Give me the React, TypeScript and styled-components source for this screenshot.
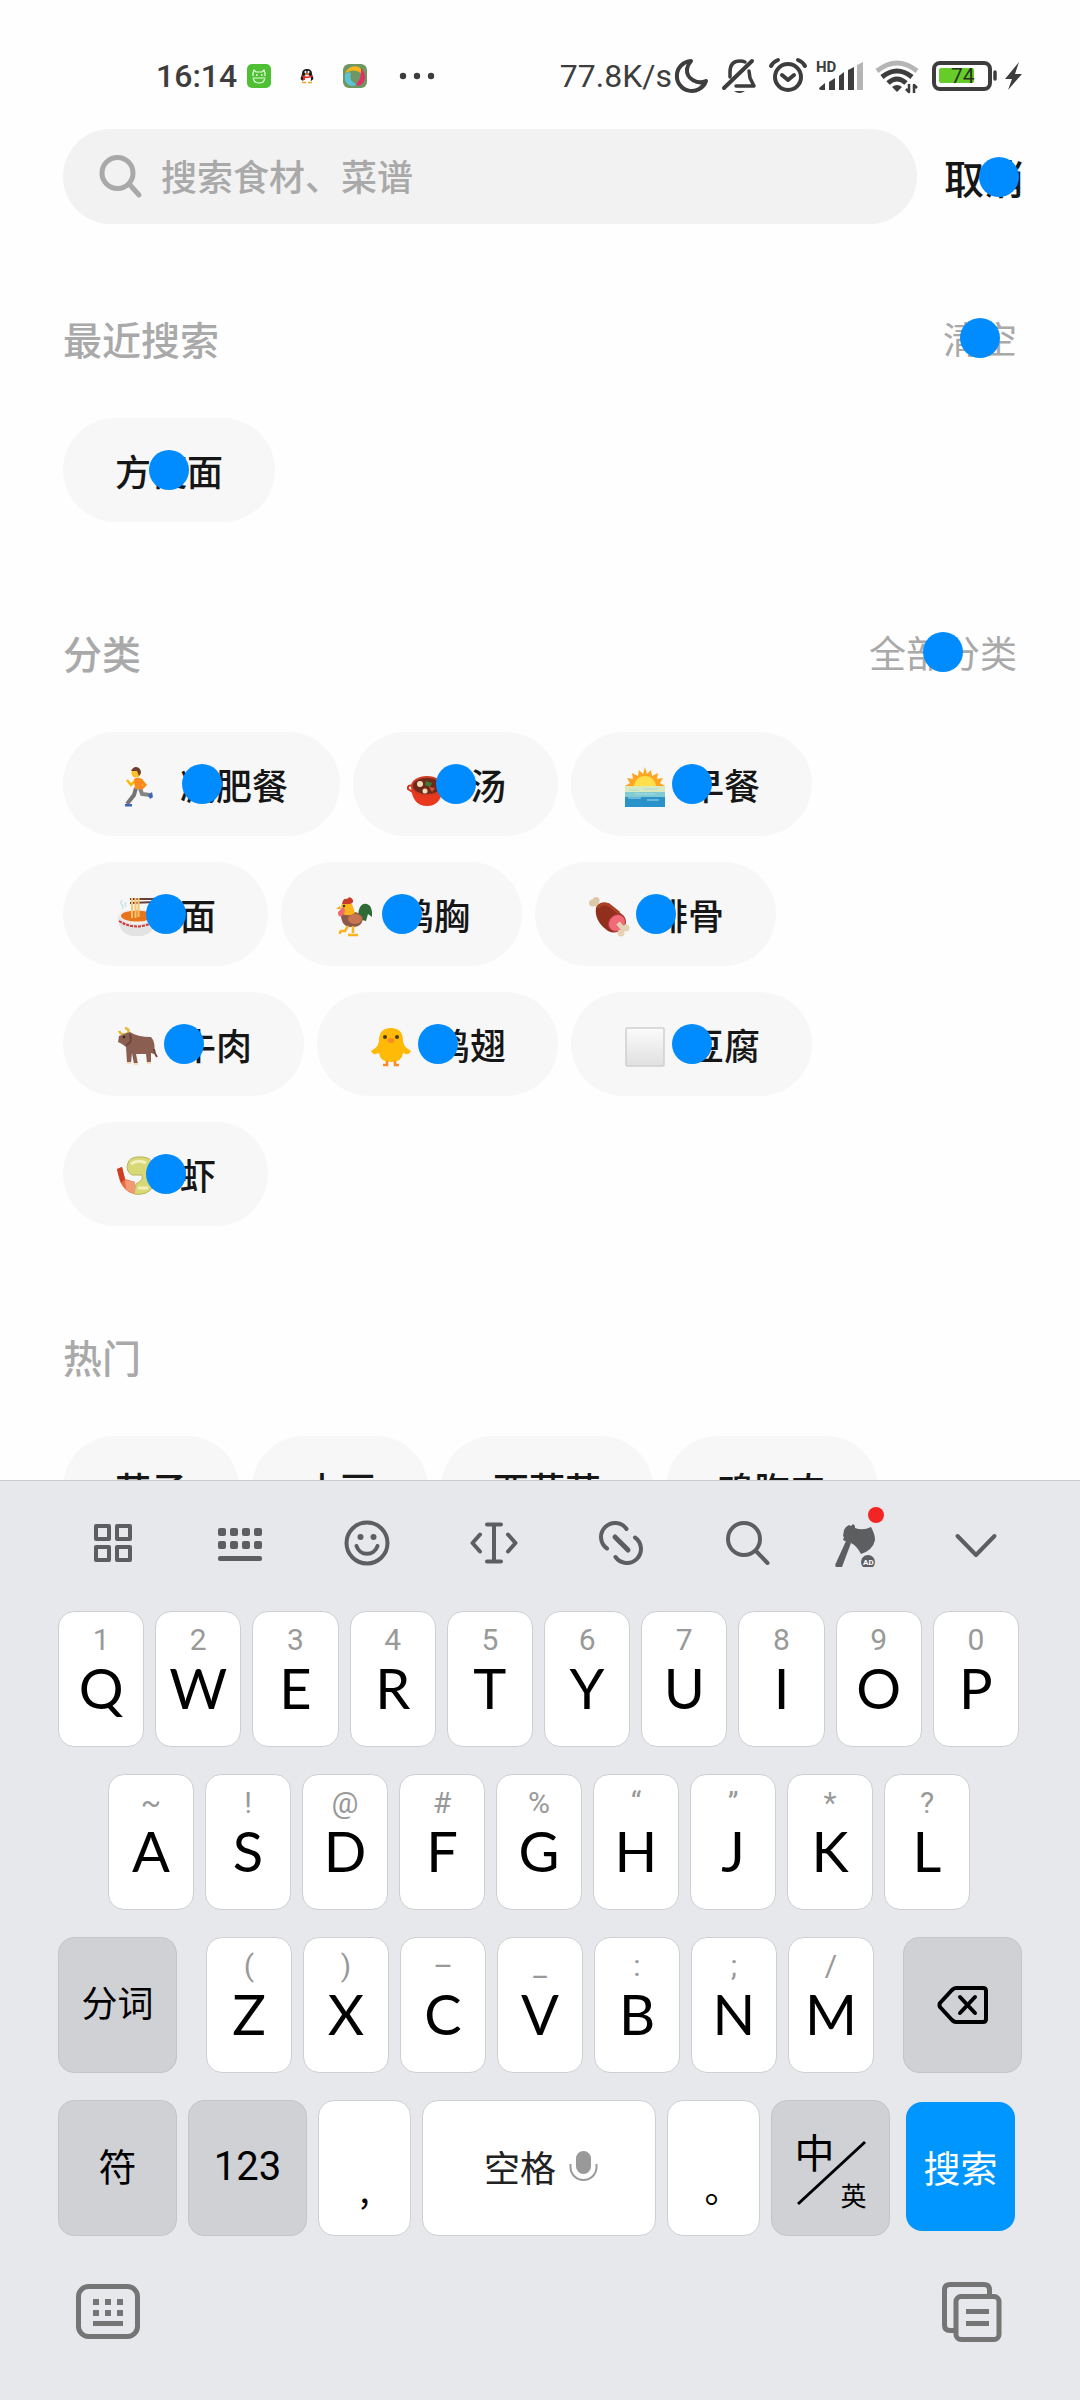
import React from "react";
import styled, { createGlobalStyle } from "styled-components";

const cjk = '"Noto Sans CJK SC", "Noto Sans", sans-serif';
const latin = 'Roboto, "Noto Sans CJK SC", sans-serif';

const GlobalStyle = createGlobalStyle`
  *, *::before, *::after { box-sizing: border-box; }
  body { margin: 0; background: #fefefe; font-family: ${cjk}; }
  button, input { font: inherit; color: inherit; border: 0; padding: 0; margin: 0; background: none; }
  button { cursor: pointer; }
  svg { display: block; flex: none; }
`;

const Screen = styled.div`
  display: flex;
  flex-direction: column;
  height: 100vh;
  background: #fefefe;
`;

/* ---------- status bar ---------- */

const StatusBar = styled.header`
  flex: none;
  display: flex;
  align-items: center;
  justify-content: space-between;
  height: 129px;
  padding: 22px 57px 0 156px;
  color: #3d3d3d;
  font: 500 32px/40px ${latin};
`;

const StatusGroup = styled.div`
  display: flex;
  align-items: center;
`;

const Notices = styled.div`
  display: flex;
  align-items: center;
  gap: 24px;
  margin-left: 10px;
`;

const Speed = styled.span`
  font-weight: 400;
`;

/* ---------- search page ---------- */

const SearchRow = styled.form`
  flex: none;
  display: flex;
  align-items: stretch;
  height: 95px;
  padding-left: 63px;
`;

const SearchField = styled.label`
  flex: 1;
  display: flex;
  align-items: center;
  gap: 17px;
  min-width: 0;
  padding-left: 36px;
  border-radius: 48px;
  background: #f2f2f2;
`;

const SearchInput = styled.input`
  flex: 1;
  min-width: 0;
  padding-bottom: 4px;
  outline: 0;
  color: #161616;
  font-size: 36px;
  line-height: 52px;
  font-weight: 500;
  &::placeholder { color: #a9a9a9; opacity: 1; }
`;

const CancelButton = styled.button`
  position: relative;
  padding: 0 56px 0 27px;
  color: #161616;
  font-size: 40px;
  line-height: 52px;
  font-weight: 500;
`;

const Dot = styled.span`
  position: absolute;
  top: 50%;
  left: 50%;
  width: 40px;
  height: 40px;
  margin: -20px 0 0 -20px;
  border-radius: 50%;
  background: #008cff;
`;

const Content = styled.main`
  flex: 1;
  min-height: 0;
  overflow: hidden;
  display: flex;
  flex-direction: column;
  gap: 104px;
  padding: 88px 63px 0;
`;

const Section = styled.section`
  flex: none;
`;

const SectionHead = styled.div`
  display: flex;
  align-items: center;
  justify-content: space-between;
  height: 52px;
  margin-bottom: 54px;
  color: #a9a9a9;
`;

const SectionTitle = styled.h2`
  margin: 0;
  font-size: 39px;
  line-height: 52px;
  font-weight: 500;
`;

const SectionAction = styled.button`
  position: relative;
  font-size: 37px;
  line-height: 52px;
`;

const Chips = styled.div`
  display: flex;
  flex-wrap: wrap;
  gap: 26px 13px;
  max-width: 860px;
`;

const Chip = styled.button`
  position: relative;
  display: flex;
  align-items: center;
  height: 104px;
  padding: 0 52px;
  border-radius: 52px;
  background: #f7f7f7;
  color: #161616;
  font-size: 36px;
  line-height: 52px;
  font-weight: 500;
`;

const EmojiBox = styled.span`
  width: 65px;
  padding: 5px 0 0 2px;
`;

/* ---------- keyboard ---------- */

const Keyboard = styled.section`
  flex: none;
  border-top: 1px solid #c9cacd;
  background: #e6e8ec;
`;

const Toolbar = styled.div`
  display: grid;
  grid-template-columns: repeat(6, 127fr) 88fr 154fr;
  height: 130px;
  padding: 0 27px 6px 50px;
`;

const ToolButton = styled.button`
  display: flex;
  align-items: center;
  justify-content: center;
  color: #5d5e60;
`;

const Badged = styled.span`
  position: relative;
`;

const RedBadge = styled.span`
  position: absolute;
  top: -12px;
  right: -5px;
  width: 16px;
  height: 16px;
  border-radius: 50%;
  background: #f22424;
`;

const KeyRows = styled.div`
  display: flex;
  flex-direction: column;
  gap: 27px;
`;

const LetterRow = styled.div<{ $left?: number; $right?: number }>`
  display: grid;
  grid-auto-flow: column;
  grid-auto-columns: minmax(0, 1fr);
  gap: 11px;
  padding-left: ${(p) => p.$left ?? 0}px;
  padding-right: ${(p) => p.$right ?? 0}px;
`;

const ShiftRow = styled.div`
  display: grid;
  grid-template-columns: 119fr 668fr 119fr;
  gap: 29px;
  padding: 0 58px;
`;

const SpaceRow = styled.div`
  display: grid;
  grid-template-columns: 119fr 119fr 93fr 234fr 93fr 119fr 121fr;
  gap: 11px;
  padding: 0 58px;
`;

const Key = styled.button<{ $grey?: boolean }>`
  display: flex;
  align-items: center;
  justify-content: center;
  min-width: 0;
  height: 136px;
  border: 1px solid ${(p) => (p.$grey ? "#c4c5c8" : "#cfcfd2")};
  border-radius: 16px;
  background: ${(p) => (p.$grey ? "#d0d1d5" : "#ffffff")};
  color: #000;
  font-size: 36px;
  line-height: 52px;
`;

const LetterKey = styled(Key)`
  flex-direction: column;
  justify-content: flex-start;
  padding-top: 12px;
`;

const Hint = styled.span`
  color: #999;
  font: 400 30px/32px ${latin};
`;

const Letter = styled.span`
  font: 400 56px/64px Lato, sans-serif;
`;

const SplitKey = styled(Key)`
  padding-bottom: 8px;
`;

const SymbolKey = styled(Key)`
  padding-bottom: 6px;
  font-size: 38px;
`;

const NumberKey = styled(Key)`
  padding-bottom: 2px;
  font: 400 40px/52px ${latin};
`;

const PunctKey = styled(Key)`
  align-items: flex-end;
  padding-bottom: 22px;
  font-feature-settings: "halt";
`;

const SpaceKey = styled(Key)`
  gap: 13px;
  padding: 0 0 4px 4px;
  color: #222;
`;

const GoKey = styled(Key)`
  height: 129px;
  margin: 2px 7px 5px 5px;
  border: 0;
  background: #0096ff;
  color: #fff;
  font-size: 37px;
`;

const LangLabel = styled.span`
  position: relative;
  display: flex;
  flex-direction: column;
  width: 72px;
  padding-top: 9px;
`;

const LangMain = styled.span`
  align-self: flex-start;
  font-size: 40px;
  line-height: 44px;
`;

const LangAlt = styled.span`
  align-self: flex-end;
  font-size: 26px;
  line-height: 43px;
`;

const Slash = styled.svg`
  position: absolute;
  left: 2px;
  top: 20px;
`;

const BottomBar = styled.div`
  display: flex;
  align-items: center;
  justify-content: space-between;
  height: 164px;
  padding: 0 78px 12px 76px;
  color: #757575;
`;

/* ---------- drawings ---------- */

const emojis: Record<string, React.ReactNode> = {
  run: (
    <>
      <path d="M19 21 L17 28 L10 37" stroke="#757575" strokeWidth="4" fill="none" />
      <path d="M23 21 L25 27 L33 28" stroke="#858585" strokeWidth="4" fill="none" />
      <path d="M8 37 h7 v2.500 h-7z M31 28 l4-3 1 5-3 2z" fill="#3f65b5" />
      <path d="M18 14 L14 18 L10 13" stroke="#ffb800" strokeWidth="2.500" fill="none" />
      <path d="M17 12 Q22 9 26 13 L25 22 H18z" fill="#ff8a1c" />
      <path d="M24 13 L28 18 L24 22" stroke="#ff8a1c" strokeWidth="3" fill="none" />
      <circle cx="19" cy="6" r="4.500" fill="#ffc024" />
      <path d="M14 4 Q17-2 22 1 Q26 5 22 9 L20 4z" fill="#6d3f2c" />
    </>
  ),
  pot: (
    <>
      <path d="M6 19 Q0 17 1 22 L7 26 M34 19 Q40 17 39 22 L33 26" stroke="#d8321c" strokeWidth="2" fill="none" />
      <path d="M4 19 Q5 39 20 39 Q35 39 36 19z" fill="#e8391f" />
      <ellipse cx="20" cy="19" rx="16" ry="10" fill="#d23a22" />
      <ellipse cx="20" cy="19" rx="14" ry="8" fill="#6d2a1c" />
      <circle cx="13" cy="17" r="3" fill="#f1dcb8" />
      <circle cx="18" cy="24" r="2.500" fill="#f1dcb8" />
      <path d="M19 14l6 2-2 4-5-2z" fill="#3f7a35" />
      <path d="M22 20l6 1-3 4z" fill="#d9532a" />
    </>
  ),
  sunrise: (
    <>
      <path d="M0 19 L5 16 L2 11 L8 12 L7 6 L13 9 L14 3 L18 7 L20 0 L22 7 L26 3 L27 9 L33 6 L32 12 L38 11 L35 16 L40 19z" fill="#ffa51f" />
      <path d="M9 20 A11 11 0 0 1 31 20z" fill="#ffe04a" />
      <rect y="19" width="40" height="7" fill="#d8e9bd" />
      <rect y="25" width="40" height="6" fill="#83cbd3" />
      <rect y="30" width="40" height="10" fill="#2992cb" />
      <path d="M4 23h10M18 22h15M10 27h20M3 31h13M22 33h12" stroke="#aadbe0" />
    </>
  ),
  noodles: (
    <>
      <path d="M13 2 H39 M13 6 L39 5" stroke="#6b4038" strokeWidth="1.800" />
      <path d="M5 3 q-2 3 0 5 t0 4 M9 5 q-2 3 0 5" stroke="#c9e3ee" strokeWidth="1.500" fill="none" />
      <ellipse cx="20" cy="19" rx="19" ry="7" fill="#f0efee" />
      <ellipse cx="20" cy="19" rx="16" ry="5.500" fill="#e8741c" />
      <path d="M15 1v20M18.500 1v20M21.500 1v19" stroke="#f7c56d" strokeWidth="2" />
      <path d="M1 19 Q1 36 15 39 H25 Q39 36 39 19 Q30 27 20 27 Q8 27 1 19z" fill="#e3e3e4" />
      <path d="M2 24 Q20 35 38 24" stroke="#d23a35" strokeWidth="2" strokeDasharray="3 1" fill="none" />
    </>
  ),
  rooster: (
    <>
      <path d="M23 22 Q23 5 32 7 Q38 9 37 20 L33 17 L31 24z" fill="#2e6b35" />
      <path d="M6 14 Q5 29 15 30 Q28 31 28 20 Q23 15 19 15z" fill="#8d5a47" />
      <path d="M6 8 Q12 2 17 7 L20 16 Q15 20 7 17z" fill="#fbb41a" />
      <ellipse cx="20" cy="22" rx="7" ry="5" fill="#c67650" />
      <path d="M7 7 Q8 1 12 2 Q15-2 18 3 Q19 7 13 7z" fill="#c73b2b" />
      <path d="M8 10 Q12 13 8 18 Q3 22 3 15z" fill="#ef6b70" />
      <path d="M5 9 L1 12 L6 12z" fill="#f9a01f" />
      <circle cx="9" cy="9" r="1.200" fill="#402c28" />
      <path d="M13 29 L10 34 H5 M18 29 V36 M13 38 H23 M5 34v3" stroke="#f9b51d" strokeWidth="2.500" fill="none" />
    </>
  ),
  meat: (
    <>
      <circle cx="3.500" cy="6" r="3.500" fill="#ddc8a8" />
      <circle cx="7" cy="3.500" r="3.500" fill="#ddc8a8" />
      <path d="M6 6 L12 12" stroke="#ddc8a8" strokeWidth="4" />
      <path d="M7 11 Q10 4 19 6 L35 19 Q39 26 33 32 Q27 38 19 34 Q5 24 7 11z" fill="#8f2f1c" />
      <path d="M9 11 Q13 5 20 8 L30 16" stroke="#aa4028" strokeWidth="3" fill="none" />
      <ellipse cx="28" cy="26" rx="9" ry="8" transform="rotate(-45 28 26)" fill="#f06a78" stroke="#b93a3c" />
      <path d="M29 26 L35 33" stroke="#e4d2b4" strokeWidth="4.500" />
      <circle cx="37" cy="31" r="3.500" fill="#e4d2b4" />
      <circle cx="32" cy="36" r="3.500" fill="#e4d2b4" />
    </>
  ),
  ox: (
    <>
      <path d="M2 4 Q5 10 11 6 Q13 2 8 1" stroke="#e9b634" strokeWidth="2.500" fill="none" />
      <path d="M2 9 L13 5 Q20 10 34 10 Q39 15 37 27 L34 26 L34 36 H30 L29 27 H19 L21 37 H17 L15 26 L14 36 H10 L9 20 Q6 17 1 15z" fill="#8a5f52" />
      <path d="M13 7 Q16 16 9 18" stroke="#6a453c" strokeWidth="2" fill="none" />
      <circle cx="7" cy="10" r="1.200" fill="#2e1f1c" />
      <path d="M37 22 Q37 26 40 30" stroke="#6a453c" strokeWidth="2" fill="none" />
      <path d="M10 36h4M17 37h4M30 36h4" stroke="#f0ddb6" strokeWidth="2" />
    </>
  ),
  chick: (
    <>
      <path d="M8 12 Q9 1 20 1 Q31 1 32 12 Q31 19 40 24 Q38 29 32 26 Q31 35 20 35 Q9 35 8 26 Q2 29 0 24 Q9 19 8 12z" fill="#ffb907" />
      <circle cx="14" cy="10" r="2" fill="#4a3a22" />
      <circle cx="26" cy="10" r="2" fill="#4a3a22" />
      <ellipse cx="20" cy="13.500" rx="3.500" ry="2.500" fill="#fb8c25" />
      <path d="M16 34v4h-4M24 34v4h4" stroke="#fb8c25" strokeWidth="2.500" fill="none" />
    </>
  ),
  tofu: (
    <>
      <defs>
        <linearGradient id="tofu" x1="0" y1="0" x2="0" y2="1">
          <stop offset="0" stopColor="#fbfbfb" />
          <stop offset="1" stopColor="#e0e0e0" />
        </linearGradient>
      </defs>
      <rect x="1" y="1" width="38" height="38" rx="1" fill="url(#tofu)" stroke="#cfcfcf" strokeWidth="1.500" />
    </>
  ),
  shrimp: (
    <>
      <path d="M11 6 Q12 1 20 0 Q32-1 35 5 Q41 16 36 30 Q30 39 17 37 L19 27 Q27 23 25 18 L15 18 Q8 14 11 6z" fill="#d9d877" stroke="#b9b55c" />
      <path d="M14 7 Q21 2 29 6 M21 31 L31 31" stroke="#f2f1bd" strokeWidth="3" fill="none" />
      <path d="M0 12 L5 10 L8 22 L18 25 L17 37 Q3 34 0 12z" fill="#e8693f" />
      <path d="M8 23 L18 25 L17 37 L9 33z" fill="#f29a72" />
      <path d="M0 12 L5 10 L8 22 L4 26z" fill="#cc3d22" />
    </>
  ),
};

function Emoji({ name }: { name: string }) {
  return (
    <EmojiBox aria-hidden="true">
      <svg width="40" height="40" viewBox="0 0 40 40" overflow="visible">{emojis[name]}</svg>
    </EmojiBox>
  );
}

function NoticeIcons() {
  return (
    <Notices aria-hidden="true">
      <svg width="24" height="24" viewBox="0 0 24 24">
        <rect width="24" height="24" rx="5" fill="#4fc034" />
        <path d="M6 12 V9 L7 6 L9 8 H15 L17 6 L18 9 V12 M5.500 14 H18.500 M6.500 15 Q7 19 12 19 Q17 19 17.500 15" stroke="#e9ffe4" strokeWidth="1.200" fill="none" />
        <path d="M9 11h1.500M14 11h1.500" stroke="#fff" strokeWidth="1.500" />
      </svg>
      <svg width="24" height="24" viewBox="0 0 24 24">
        <path d="M7 10 Q7 5 12 5 Q17 5 17 10 L18.500 15 L16 17 H8 L5.500 15z" fill="#171717" />
        <ellipse cx="12" cy="15" rx="4" ry="4" fill="#fff" />
        <path d="M7 11 Q12 14 17 11 V13 Q12 15 7 13z M8 13h2v3h-2z" fill="#e3261e" />
        <ellipse cx="10.500" cy="8" rx="1" ry="1.300" fill="#fff" />
        <ellipse cx="13.500" cy="8" rx="1" ry="1.300" fill="#fff" />
        <path d="M10 10h4M7 18.500h4M13 18.500h4" stroke="#f4a21c" strokeWidth="1.500" />
      </svg>
      <svg width="24" height="24" viewBox="0 0 24 24">
        <rect width="24" height="24" rx="6" fill="#6f9763" />
        <path d="M2 9 Q7 0 16 3 Q19 5 18 9 Q11 4 2 9z" fill="#f7b51c" />
        <path d="M18 4 Q25 12 20 19 Q17 23 12 21 Q19 16 18 4z" fill="#e62e66" />
        <path d="M2 10 Q6 7 8 9 Q5 16 14 21 Q5 24 2 16z" fill="#5cc3d8" />
      </svg>
      <svg width="52" height="24" viewBox="-9 0 52 24" fill="currentColor">
        <circle cx="3" cy="12" r="3.200" />
        <circle cx="17" cy="12" r="3.200" />
        <circle cx="31" cy="12" r="3.200" />
      </svg>
    </Notices>
  );
}

function SystemIcons() {
  const line = { fill: "none", stroke: "currentColor", strokeWidth: 4, strokeLinecap: "round" as const, strokeLinejoin: "round" as const };
  return (
    <>
      <svg width="43" height="40" viewBox="672 55 43 40" {...line} aria-label="勿扰">
        <path d="M691 60 A15 15 0 1 0 706 80 C698 84 686 78 687 68 Q688 63 691 60z" />
      </svg>
      <svg width="48" height="40" viewBox="715 55 48 40" {...line} aria-label="静音">
        <path d="M724 87 L752 60" />
        <path d="M730 76 V71 Q730 60 740 60 Q743 60 745 61 M749 70 L750 77 L754 85 H736" strokeWidth="3.500" />
        <path d="M734 90 h11 q-5.500 4 -11 0z" fill="currentColor" stroke="none" />
      </svg>
      <svg width="49" height="40" viewBox="763 55 49 40" {...line} aria-label="闹钟">
        <circle cx="788" cy="76" r="13" />
        <path d="M782 74 L788 79 L794 74" />
        <path d="M771 65 Q773 61 778 59 M798 59 Q803 61 805 65" />
      </svg>
      <svg width="58" height="40" viewBox="812 55 58 40" fill="currentColor" aria-label="信号">
        <text x="816" y="71" fontSize="15" fontWeight="700" fontFamily="Roboto, sans-serif">HD</text>
        <path d="M819 87 L825 82 V89 H821 Q819 89 819 87z M829 81 L835 77 V89 H829z M839 75 L844 71 V89 H839z M848 69 L854 66 V89 H848z" />
        <path d="M857 64 L863 61 V89 H857z" fill="#b5b5b5" />
      </svg>
      <svg width="55" height="40" viewBox="870 55 55 40" {...line} strokeWidth={5} strokeLinecap="butt" aria-label="无线网络">
        <path d="M877 70 Q897 54 917 70" stroke="#b5b5b5" />
        <path d="M882 76 Q897 64 912 76" />
        <path d="M888 82 Q897 74 906 82" />
        <path d="M892 86 Q897 82 902 86 L897 91z" fill="currentColor" stroke="none" />
        <path d="M909 83 V91 L906 88 M914 92 V84 L917 87" strokeWidth="2.500" />
      </svg>
      <svg width="76" height="40" viewBox="925 55 76 40" {...line} aria-label="电量">
        <rect x="934" y="62" width="56" height="26" rx="6" />
        <path d="M995 71 V78" strokeWidth="3.500" />
        <rect x="939" y="67" width="35" height="15" rx="2" fill="#66cc28" stroke="none" />
        <text x="951" y="82" fontSize="21" fontWeight="400" fontFamily="Roboto, sans-serif" fill="#26331f" stroke="none">74</text>
      </svg>
      <svg width="22" height="40" viewBox="1001 55 22 40" fill="currentColor" aria-label="充电">
        <path d="M1019 61 L1005 78 H1012 L1008 89 L1022 73 H1015z" />
      </svg>
    </>
  );
}

type ToolProps = { label: string; children: React.ReactNode; badge?: boolean };

function Tool({ label, children, badge }: ToolProps) {
  return (
    <ToolButton type="button" aria-label={label}>
      <Badged>
        <svg width="48" height="48" viewBox="0 0 48 48" fill="none" stroke="currentColor" strokeWidth="4" strokeLinecap="round" strokeLinejoin="round">
          {children}
        </svg>
        {badge && <RedBadge />}
      </Badged>
    </ToolButton>
  );
}

function KeyboardTools() {
  return (
    <Toolbar>
      <Tool label="菜单">
        <rect x="7" y="7" width="13" height="13" />
        <rect x="28" y="7" width="13" height="13" />
        <rect x="7" y="28" width="13" height="13" />
        <rect x="28" y="28" width="13" height="13" />
      </Tool>
      <Tool label="键盘">
        <g fill="currentColor" stroke="none">
          {[9, 22].map((y) => [2, 14, 26, 38].map((x) => <rect key={`${x}-${y}`} x={x} y={y} width="8" height="8" rx="2" />))}
          <rect x="2" y="37" width="44" height="5" rx="2" />
        </g>
      </Tool>
      <Tool label="表情">
        <circle cx="24" cy="24" r="20.500" />
        <path d="M13.500 27 A11 11 0 0 0 34.500 27" />
        <circle cx="17.500" cy="18" r="3" fill="currentColor" stroke="none" />
        <circle cx="30.500" cy="18" r="3" fill="currentColor" stroke="none" />
      </Tool>
      <Tool label="光标">
        <path d="M24 5.500 V42.500 M17 5.500 H31 M17 42.500 H31 M10 15.500 L2.500 24 L10 32.500 M38 15.500 L45.500 24 L38 32.500" />
      </Tool>
      <Tool label="链接">
        <path d="M29.500 10 A14 14 0 1 0 10 29.500 M38 18.500 A14 14 0 1 1 18.500 38" />
        <path d="M18 18 L31 31" strokeWidth="5" />
      </Tool>
      <Tool label="搜索">
        <circle cx="20" cy="20" r="16" />
        <path d="M32 32 L43.500 44" />
      </Tool>
      <Tool label="推荐" badge>
        <g fill="currentColor" stroke="none">
          <path d="M15 22 L20 24 L11 48 Q8 51 5 48 Q4 47 4.500 45z" />
          <path d="M12 21 L13 18 L12 17 L13 11 L15 8 L18 6 L20 7 L22 5 L24 7 L24 9 Q32 12 40 8 Q44 15 44 21 Q42 31 30 35 Q26 27 20 24 L16 23z" />
          <circle cx="37" cy="43" r="7" />
          <text x="32" y="46" fontSize="8" fontWeight="700" fontFamily="Roboto, sans-serif" fill="#fff">AD</text>
        </g>
      </Tool>
      <Tool label="收起">
        <path d="M5.500 17 L24 36 L42.500 17" />
      </Tool>
    </Toolbar>
  );
}

const topKeys = [["1", "Q"], ["2", "W"], ["3", "E"], ["4", "R"], ["5", "T"], ["6", "Y"], ["7", "U"], ["8", "I"], ["9", "O"], ["0", "P"]];
const homeKeys = [["~", "A"], ["!", "S"], ["@", "D"], ["#", "F"], ["%", "G"], ["“", "H"], ["”", "J"], ["*", "K"], ["?", "L"]];
const lowKeys = [["(", "Z"], [")", "X"], ["–", "C"], ["_", "V"], [":", "B"], [";", "N"], ["/", "M"]];

function LetterKeys({ keys, left, right }: { keys: string[][]; left?: number; right?: number }) {
  return (
    <LetterRow $left={left} $right={right}>
      {keys.map(([hint, letter]) => (
        <LetterKey type="button" key={letter}>
          <Hint>{hint}</Hint>
          <Letter>{letter}</Letter>
        </LetterKey>
      ))}
    </LetterRow>
  );
}

const categories = [
  ["run", "减肥餐"], ["pot", "汤"], ["sunrise", "早餐"], ["noodles", "面"], ["rooster", "鸡胸"],
  ["meat", "排骨"], ["ox", "牛肉"], ["chick", "鸡翅"], ["tofu", "豆腐"], ["shrimp", "虾"],
];
const hot = ["茄子", "土豆", "西葫芦", "鸡胸肉"];

export default function App() {
  return (
    <Screen>
      <GlobalStyle />
      <StatusBar>
        <StatusGroup>
          <time>16:14</time>
          <NoticeIcons />
        </StatusGroup>
        <StatusGroup>
          <Speed>77.8K/s</Speed>
          <SystemIcons />
        </StatusGroup>
      </StatusBar>

      <SearchRow role="search" onSubmit={(e) => e.preventDefault()}>
        <SearchField>
          <svg width="45" height="44" viewBox="0 0 45 44" fill="none" stroke="#a9a9a9" strokeWidth="5" strokeLinecap="round">
            <circle cx="18.500" cy="18" r="15.500" />
            <path d="M31 30 L40 40" />
          </svg>
          <SearchInput type="text" placeholder="搜索食材、菜谱" aria-label="搜索食材、菜谱" />
        </SearchField>
        <CancelButton type="button">取消<Dot /></CancelButton>
      </SearchRow>

      <Content>
        <Section>
          <SectionHead>
            <SectionTitle>最近搜索</SectionTitle>
            <SectionAction type="button">清空<Dot /></SectionAction>
          </SectionHead>
          <Chips>
            <Chip type="button">方便面<Dot /></Chip>
          </Chips>
        </Section>

        <Section>
          <SectionHead>
            <SectionTitle>分类</SectionTitle>
            <SectionAction type="button">全部分类<Dot /></SectionAction>
          </SectionHead>
          <Chips>
            {categories.map(([icon, name]) => (
              <Chip type="button" key={name}>
                <Emoji name={icon} />
                {name}
                <Dot />
              </Chip>
            ))}
          </Chips>
        </Section>

        <Section>
          <SectionHead>
            <SectionTitle>热门</SectionTitle>
          </SectionHead>
          <Chips>
            {hot.map((name) => (
              <Chip type="button" key={name}>{name}</Chip>
            ))}
          </Chips>
        </Section>
      </Content>

      <Keyboard aria-label="键盘">
        <KeyboardTools />
        <KeyRows>
          <LetterKeys keys={topKeys} left={58} right={61} />
          <LetterKeys keys={homeKeys} left={108} right={110} />
          <ShiftRow>
            <SplitKey type="button" $grey>分词</SplitKey>
            <LetterKeys keys={lowKeys} />
            <Key type="button" $grey aria-label="删除">
              <svg width="52" height="40" viewBox="0 0 52 40" fill="none" stroke="#000" strokeWidth="4" strokeLinecap="round" strokeLinejoin="round">
                <path d="M19 3 H46 Q49 3 49 6 V34 Q49 37 46 37 H19 Q17 37 15 35 L3 22 Q2 20 3 18 L15 5 Q17 3 19 3z" />
                <path d="M23 12 L38 28 M38 12 L23 28" />
              </svg>
            </Key>
          </ShiftRow>
          <SpaceRow>
            <SymbolKey type="button" $grey>符</SymbolKey>
            <NumberKey type="button" $grey>123</NumberKey>
            <PunctKey type="button">,</PunctKey>
            <SpaceKey type="button">
              空格
              <svg width="29" height="32" viewBox="0 0 29 32">
                <rect x="7" y="1" width="15" height="23" rx="7.500" fill="#999" />
                <path d="M1.500 14 V17 A13 13 0 0 0 27.500 17 V14" fill="none" stroke="#999" strokeWidth="2" />
              </svg>
            </SpaceKey>
            <PunctKey type="button">。</PunctKey>
            <Key type="button" $grey>
              <LangLabel>
                <LangMain>中</LangMain>
                <LangAlt>英</LangAlt>
                <Slash width="70" height="66" viewBox="0 0 70 66" stroke="#000" strokeWidth="3">
                  <path d="M1 64 L68 2" />
                </Slash>
              </LangLabel>
            </Key>
            <GoKey type="button">搜索</GoKey>
          </SpaceRow>
        </KeyRows>
        <BottomBar>
          <button type="button" aria-label="切换键盘">
            <svg width="64" height="56" viewBox="0 0 64 56" fill="currentColor">
              <rect x="2.500" y="2.500" width="59" height="50" rx="10" fill="none" stroke="currentColor" strokeWidth="5" />
              {[15, 26].map((y) => [17, 29, 41].map((x) => <rect key={`${x}-${y}`} x={x} y={y} width="6" height="6" />))}
              <rect x="17" y="37" width="30" height="5" />
            </svg>
          </button>
          <button type="button" aria-label="剪贴板">
            <svg width="60" height="60" viewBox="0 0 60 60" fill="none" stroke="currentColor" strokeWidth="5">
              <path d="M14 48.500 H8 Q2.500 48.500 2.500 43 V8 Q2.500 2.500 8 2.500 H42 Q47.500 2.500 47.500 8 V14" />
              <rect x="14" y="14.500" width="43" height="43" rx="5" />
              <path d="M24 29.500 H47 M24 41.500 H47" />
            </svg>
          </button>
        </BottomBar>
      </Keyboard>
    </Screen>
  );
}
